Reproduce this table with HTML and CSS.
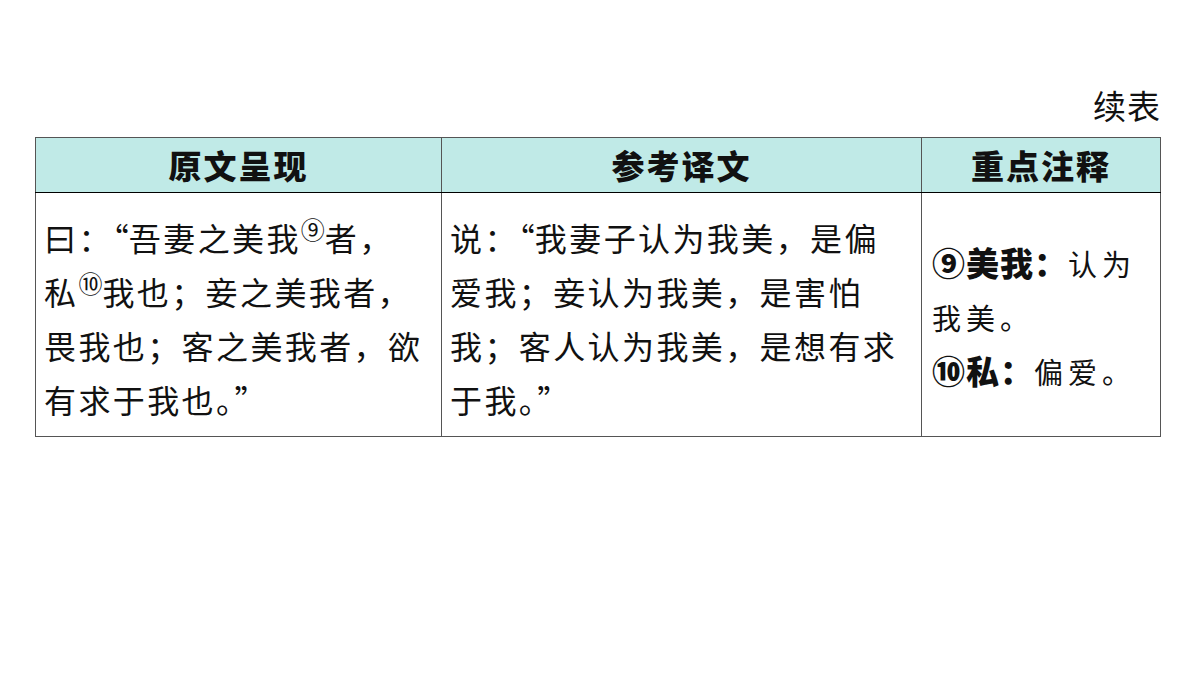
FILE: index.html
```html
<!DOCTYPE html>
<html lang="zh-CN">
<head>
<meta charset="utf-8">
<link rel="stylesheet" href="styles.css">
</head>
<body>
<div class="page">
  <div class="caption">续表</div>
  <table class="grid">
    <colgroup>
      <col class="c1"><col class="c2"><col class="c3">
    </colgroup>
    <thead>
      <tr>
        <th>原文呈现</th>
        <th>参考译文</th>
        <th>重点注释</th>
      </tr>
    </thead>
    <tbody>
      <tr>
        <td class="body">
          <div class="ln">曰：<span class="q">“</span>吾妻之美我<span class="sup">⑨</span>者，</div>
          <div class="ln">私<span class="sup">⑩</span>我也；妾之美我者，</div>
          <div class="ln">畏我也；客之美我者，欲</div>
          <div class="ln">有求于我也。<span class="q">”</span></div>
        </td>
        <td class="body">
          <div class="ln">说：<span class="q">“</span>我妻子认为我美，是偏</div>
          <div class="ln">爱我；妾认为我美，是害怕</div>
          <div class="ln">我；客人认为我美，是想有求</div>
          <div class="ln">于我。<span class="q">”</span></div>
        </td>
        <td class="note">
          <div class="note-line"><span class="term">⑨美我：</span><span class="kai">认为</span></div>
          <div class="note-line"><span class="kai">我美。</span></div>
          <div class="note-line"><span class="term">⑩私：</span><span class="kai">偏爱。</span></div>
        </td>
      </tr>
    </tbody>
  </table>
</div>
</body>
</html>
```
FILE: styles.css
```css
html, body {
  margin: 0;
  padding: 0;
  background: #ffffff;
}
body {
  font-family: "Noto Sans CJK SC", "Noto Sans", sans-serif;
  color: #111;
}
.page {
  width: 1200px;
  height: 675px;
  box-sizing: border-box;
  padding: 82px 40px 0 35px;
  display: flex;
  flex-direction: column;
}
.caption {
  align-self: flex-end;
  font-size: 33px;
  line-height: 46px;
  height: 46px;
  margin-bottom: 9px;
  letter-spacing: 1px;
  margin-right: -1px;
}
.grid {
  width: 1125px;
  border-collapse: collapse;
  table-layout: fixed;
}
.c1 { width: 406px; }
.c2 { width: 480px; }
.c3 { width: 239px; }
.grid th {
  background: #c0eae7;
  border: 1px solid #555;
  border-bottom: 1px solid #000;
  height: 54px;
  padding: 0;
  font-size: 33px;
  font-weight: 900;
  line-height: 54px;
  text-align: center;
  letter-spacing: 2px;
  color: #111;
}
.grid td {
  border: 1px solid #555;
  vertical-align: top;
}
.body {
  font-size: 32px;
  padding: 17px 4px 10px 8px;
  letter-spacing: 2.4px;
}
.ln {
  height: 54px;
  line-height: 54px;
  white-space: nowrap;
}
.ln span {
  line-height: 1;
}
.q {
  letter-spacing: 0;
}
.sup {
  font-size: 24px;
  position: relative;
  top: -12px;
  letter-spacing: 0;
}
.note {
  padding: 43px 4px 0 10px;
  vertical-align: top;
}
.note-line {
  font-size: 29px;
  height: 54px;
  line-height: 54px;
  white-space: nowrap;
}
.note-line span {
  line-height: 1;
}
.term {
  font-weight: 900;
  font-size: 33px;
  letter-spacing: 1px;
}
.kai {
  letter-spacing: 5px;
  font-weight: 400;
}
```
